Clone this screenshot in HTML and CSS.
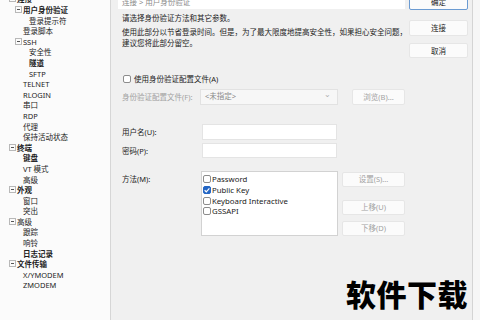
FILE: index.html
```html
<!DOCTYPE html>
<html lang="zh-CN">
<head>
  <meta charset="UTF-8">
  <title>属性 - 用户身份验证</title>
  <link rel="stylesheet" href="styles.css">
</head>
<body>
  <div class="dialog">
    <div class="tree">
      <div class="list">
        <div class="node lv0 bold"><span class="tog"></span>连接</div>
        <div class="node lv1 bold"><span class="tog"></span>用户身份验证</div>
        <div class="node lv2">登录提示符</div>
        <div class="node lv1">登录脚本</div>
        <div class="node lv1"><span class="tog"></span>SSH</div>
        <div class="node lv2">安全性</div>
        <div class="node lv2 bold">隧道</div>
        <div class="node lv2">SFTP</div>
        <div class="node lv1">TELNET</div>
        <div class="node lv1">RLOGIN</div>
        <div class="node lv1">串口</div>
        <div class="node lv1">RDP</div>
        <div class="node lv1">代理</div>
        <div class="node lv1">保持活动状态</div>
        <div class="node lv0 bold"><span class="tog"></span>终端</div>
        <div class="node lv1 bold">键盘</div>
        <div class="node lv1">VT 模式</div>
        <div class="node lv1">高级</div>
        <div class="node lv0 bold"><span class="tog"></span>外观</div>
        <div class="node lv1">窗口</div>
        <div class="node lv1">突出</div>
        <div class="node lv0"><span class="tog"></span>高级</div>
        <div class="node lv1">跟踪</div>
        <div class="node lv1">响铃</div>
        <div class="node lv1 bold">日志记录</div>
        <div class="node lv0 bold"><span class="tog"></span>文件传输</div>
        <div class="node lv1">X/YMODEM</div>
        <div class="node lv1">ZMODEM</div>
      </div>
    </div>

    <div class="main">
      <div class="crumb">连接 &gt; 用户身份验证</div>
      <p class="intro">请选择身份验证方法和其它参数。</p>
      <p class="note">使用此部分以节省登录时间。但是，为了最大限度地提高安全性，如果担心安全问题，<br>建议您将此部分留空。</p>

      <label class="check-row"><span class="box"></span>使用身份验证配置文件(A)</label>

      <div class="field profile">
        <span class="label dim">身份验证配置文件(F):</span>
        <div class="select"><span>&lt;未指定&gt;</span><span class="chev">&#8964;</span></div>
        <div class="btn dim browse">浏览(B)...</div>
      </div>

      <div class="field user">
        <span class="label">用户名(U):</span>
        <div class="input"></div>
      </div>
      <div class="field pass">
        <span class="label">密码(P):</span>
        <div class="input"></div>
      </div>

      <div class="field methods">
        <span class="label">方法(M):</span>
        <div class="methlist">
          <div class="item"><span class="box"></span>Password</div>
          <div class="item"><span class="box on"><svg viewBox="0 0 8 8" width="8" height="8"><path d="M1.6 4.2 L3.3 5.8 L6.4 2.3" fill="none" stroke="#fff" stroke-width="1.2"/></svg></span>Public Key</div>
          <div class="item"><span class="box"></span>Keyboard Interactive</div>
          <div class="item"><span class="box"></span>GSSAPI</div>
        </div>
        <div class="side-btns">
          <div class="btn dim">设置(S)...</div>
          <div class="btn dim up">上移(U)</div>
          <div class="btn dim down">下移(D)</div>
        </div>
      </div>
    </div>

    <div class="actions">
      <div class="btn ok">确定</div>
      <div class="btn connect">连接</div>
      <div class="btn cancel">取消</div>
    </div>
    <div class="edge"></div>
  </div>

  <div class="watermark">软件下载</div>
</body>
</html>
```

FILE: styles.css
```css
body {
  margin: 0;
  width: 480px;
  height: 320px;
  overflow: hidden;
  font-family: "Noto Sans", "Noto Sans CJK SC", sans-serif;
  font-size: 7.5px;
  color: #1c1c1c;
  background: #f0f0f0;
  position: relative;
}

.dialog {
  display: flex;
  height: 320px;
}

/* left tree */
.tree {
  width: 110px;
  background: #fbfbfb;
  border-right: 1px solid #d6d6d6;
  overflow: hidden;
}

.list {
  margin-top: -5.6px;
}

.node {
  line-height: 10.6px;
  height: 10.6px;
  white-space: nowrap;
}

.lv0 { padding-left: 17px; }
.lv1 { padding-left: 23px; }
.lv2 { padding-left: 29px; }

.bold { font-weight: bold; }

.tog {
  display: inline-block;
  width: 5px;
  height: 5px;
  margin-left: -8px;
  margin-right: 1px;
  border: 1px solid #b8b8b8;
  box-sizing: content-box;
  vertical-align: 0;
  position: relative;
}

.tog::after {
  content: "";
  position: absolute;
  left: 1px;
  top: 2px;
  width: 3px;
  height: 1px;
  background: #555;
}

/* main panel */
.main {
  width: 287px;
  padding-left: 7px;
}

.crumb {
  background: #fff;
  height: 9px;
  line-height: 4px;
  padding-left: 4px;
  color: #8a8a8a;
  overflow: hidden;
}

.intro, .note {
  margin: 0;
  padding-left: 4px;
  line-height: 11px;
  white-space: nowrap;
}

.intro { margin-top: 3.5px; }
.note { margin-top: 3px; }

.check-row {
  display: flex;
  align-items: center;
  margin-top: 25px;
  padding-left: 5px;
  line-height: 11px;
}

.box {
  display: inline-block;
  width: 8px;
  height: 8px;
  box-sizing: border-box;
  border: 1px solid #8c8c8c;
  border-radius: 2px;
  background: #fff;
  margin-right: 3px;
  flex: none;
}

.box.on {
  background: #2466c4;
  border-color: #2466c4;
}

.box.on svg {
  display: block;
  margin: -1px;
}

.field {
  display: flex;
  padding-left: 4px;
}

.label {
  width: 80px;
  flex: none;
  line-height: 16px;
}

.dim { color: #a2a2a2; }

.profile {
  margin-top: 4.5px;
  height: 16px;
}

.select {
  width: 138px;
  height: 16px;
  margin-left: -2px;
  box-sizing: border-box;
  border: 1px solid #e2e2e2;
  background: #f7f7f7;
  color: #8a8a8a;
  display: flex;
  justify-content: space-between;
  padding: 0 6px 0 4px;
  line-height: 13px;
}

.chev {
  color: #b0b0b0;
  line-height: 8px;
}

.btn {
  height: 16px;
  box-sizing: border-box;
  border: 1px solid #e6e6e6;
  background: #fbfbfb;
  text-align: center;
  line-height: 14px;
  border-radius: 2px;
}

.browse {
  width: 53px;
  margin-left: 14px;
}

.user {
  margin-top: 19px;
}

.pass {
  margin-top: 3px;
}

.input {
  width: 135px;
  height: 16px;
  box-sizing: border-box;
  background: #fff;
  border: 1px solid #e4e4e4;
}

.pass .input { height: 15px; }

.methods {
  margin-top: 12px;
}

.methods .label {
  line-height: 11px;
  padding-top: 3px;
}

.methlist {
  width: 137px;
  height: 65px;
  margin-left: -1px;
  box-sizing: border-box;
  background: #fff;
  border: 1px solid #d2d2d2;
  padding: 2px 0 0 1px;
}

.item {
  display: flex;
  align-items: center;
  height: 10.7px;
  font-size: 7.8px;
  color: #222;
}

.item .box {
  margin-right: 1px;
}

.side-btns {
  width: 63px;
  margin-left: 4px;
  padding-top: 1px;
}

.side-btns .btn {
  height: 15px;
  line-height: 13px;
}

.side-btns .up { margin-top: 13px; }
.side-btns .down { margin-top: 6px; }

/* right buttons */
.actions {
  width: 59px;
  padding-left: 4px;
  flex: none;
}

.actions .btn {
  width: 59px;
}

.ok {
  margin-top: -6px;
  border-color: #6b9bd2;
}

.connect { margin-top: 10px; }
.cancel { margin-top: 7px; height: 15px; }

.edge {
  flex: 1;
  margin-left: 4px;
  border-left: 1px solid #d4d4d4;
  background: #f6f6f6;
}

/* overlay text */
.watermark {
  position: absolute;
  left: 346px;
  top: 278px;
  font-family: "Noto Sans CJK SC", sans-serif;
  font-weight: 900;
  font-size: 30px;
  line-height: 30px;
  color: #000;
  letter-spacing: 0.5px;
}
```
